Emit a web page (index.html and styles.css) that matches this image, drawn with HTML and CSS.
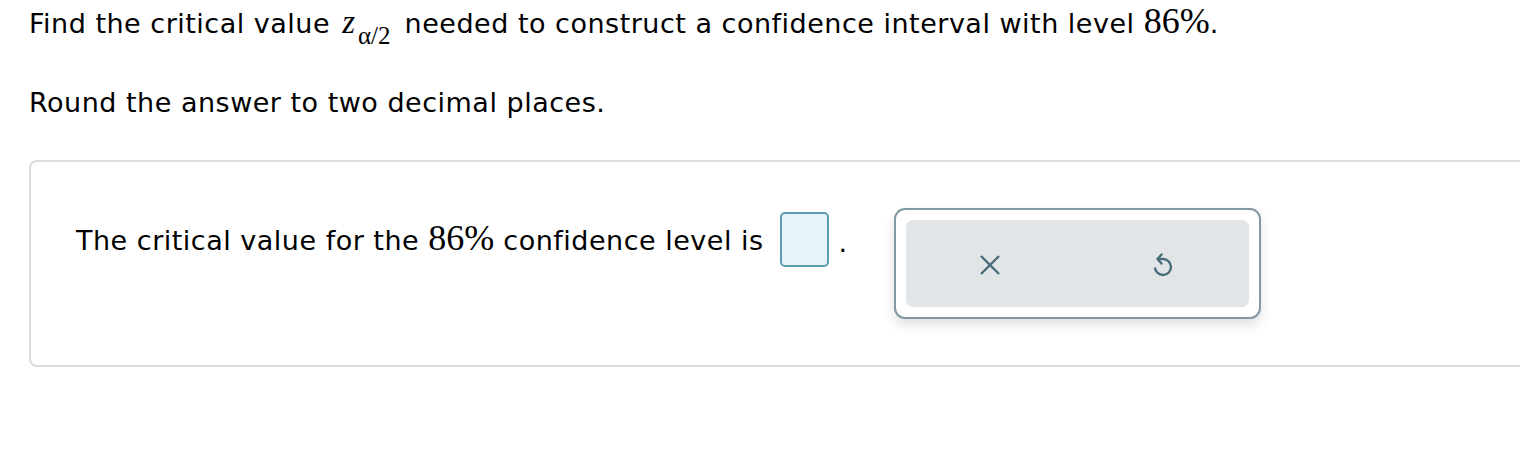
FILE: index.html
```html
<!DOCTYPE html>
<html>
<head>
<meta charset="utf-8">
<link rel="stylesheet" href="styles.css">
</head>
<body>
<div class="page">
  <p class="q1">Find the critical value <span class="math"><i class="zv">z</i><sub class="sub">α/2</sub></span> needed to construct a confidence interval with level <span class="math num">86%</span>.</p>
  <p class="q2">Round the answer to two decimal places.</p>
  <div class="card">
    <div class="row">
      <span class="stmt">The critical value for the <span class="math num">86%</span> confidence level is</span>
      <span class="input"></span>
      <span class="dot">.</span>
      <div class="panel">
        <div class="tools">
          <svg class="ico" width="24" height="24" viewBox="0 0 24 24"><path d="M3 3 L21 21 M21 3 L3 21" stroke="#4a6b78" stroke-width="2.4" fill="none"/></svg>
          <svg class="ico" width="26" height="28" viewBox="0 0 26 28"><path d="M8 8 H13 A8 8 0 1 1 5 16.5" stroke="#4a6b78" stroke-width="2.4" fill="none"/><path d="M11.5 3.5 L7.5 8 L11.5 12.5" stroke="#4a6b78" stroke-width="2.4" fill="none" stroke-linecap="round" stroke-linejoin="round"/></svg>
        </div>
      </div>
    </div>
  </div>
</div>
</body>
</html>
```
FILE: styles.css
```css
html, body { margin: 0; padding: 0; background: #fff; }
body { font-family: "DejaVu Sans", Verdana, sans-serif; font-size: 27px; letter-spacing: 0.5px; color: #000; }
.page { padding: 6px 0 0 29px; }
p { margin: 0; line-height: 36px; }
.q2 { margin-top: 43px; }
.math { font-family: "Liberation Serif", "Times New Roman", serif; line-height: 0; letter-spacing: 0; }
.zv { font-size: 33px; margin-left: 3px; }
.sub { font-size: 25px; vertical-align: -11px; line-height: 0; margin-left: 3px; margin-right: 5px; }
.math.num { font-size: 36px; }
.card { margin-top: 39px; border: 2px solid #d9dde0; border-right: none; border-radius: 8px 0 0 8px; height: 207px; box-sizing: border-box; padding: 46px 0 0 45px; }
.row { display: flex; align-items: flex-start; }
.stmt { margin-top: 17px; white-space: nowrap; }
.input { flex: none; width: 49px; height: 55px; box-sizing: border-box; border: 2px solid #5a9cb0; border-radius: 5px; background: #e8f3f9; margin: 4px 0 0 16px; }
.dot { margin: 17px 0 0 10px; line-height: 36px; }
.panel { flex: none; margin-left: 46px; width: 367px; height: 111px; box-sizing: border-box; border: 2px solid #8299a3; border-radius: 11px; padding: 10px; background: #fff; box-shadow: 0 6px 12px rgba(0,0,0,0.12); }
.tools { height: 100%; background: #e1e5e8; border-radius: 7px; display: flex; align-items: center; justify-content: center; gap: 148px; padding-top: 2px; box-sizing: border-box; }
.ico { display: block; }
```
